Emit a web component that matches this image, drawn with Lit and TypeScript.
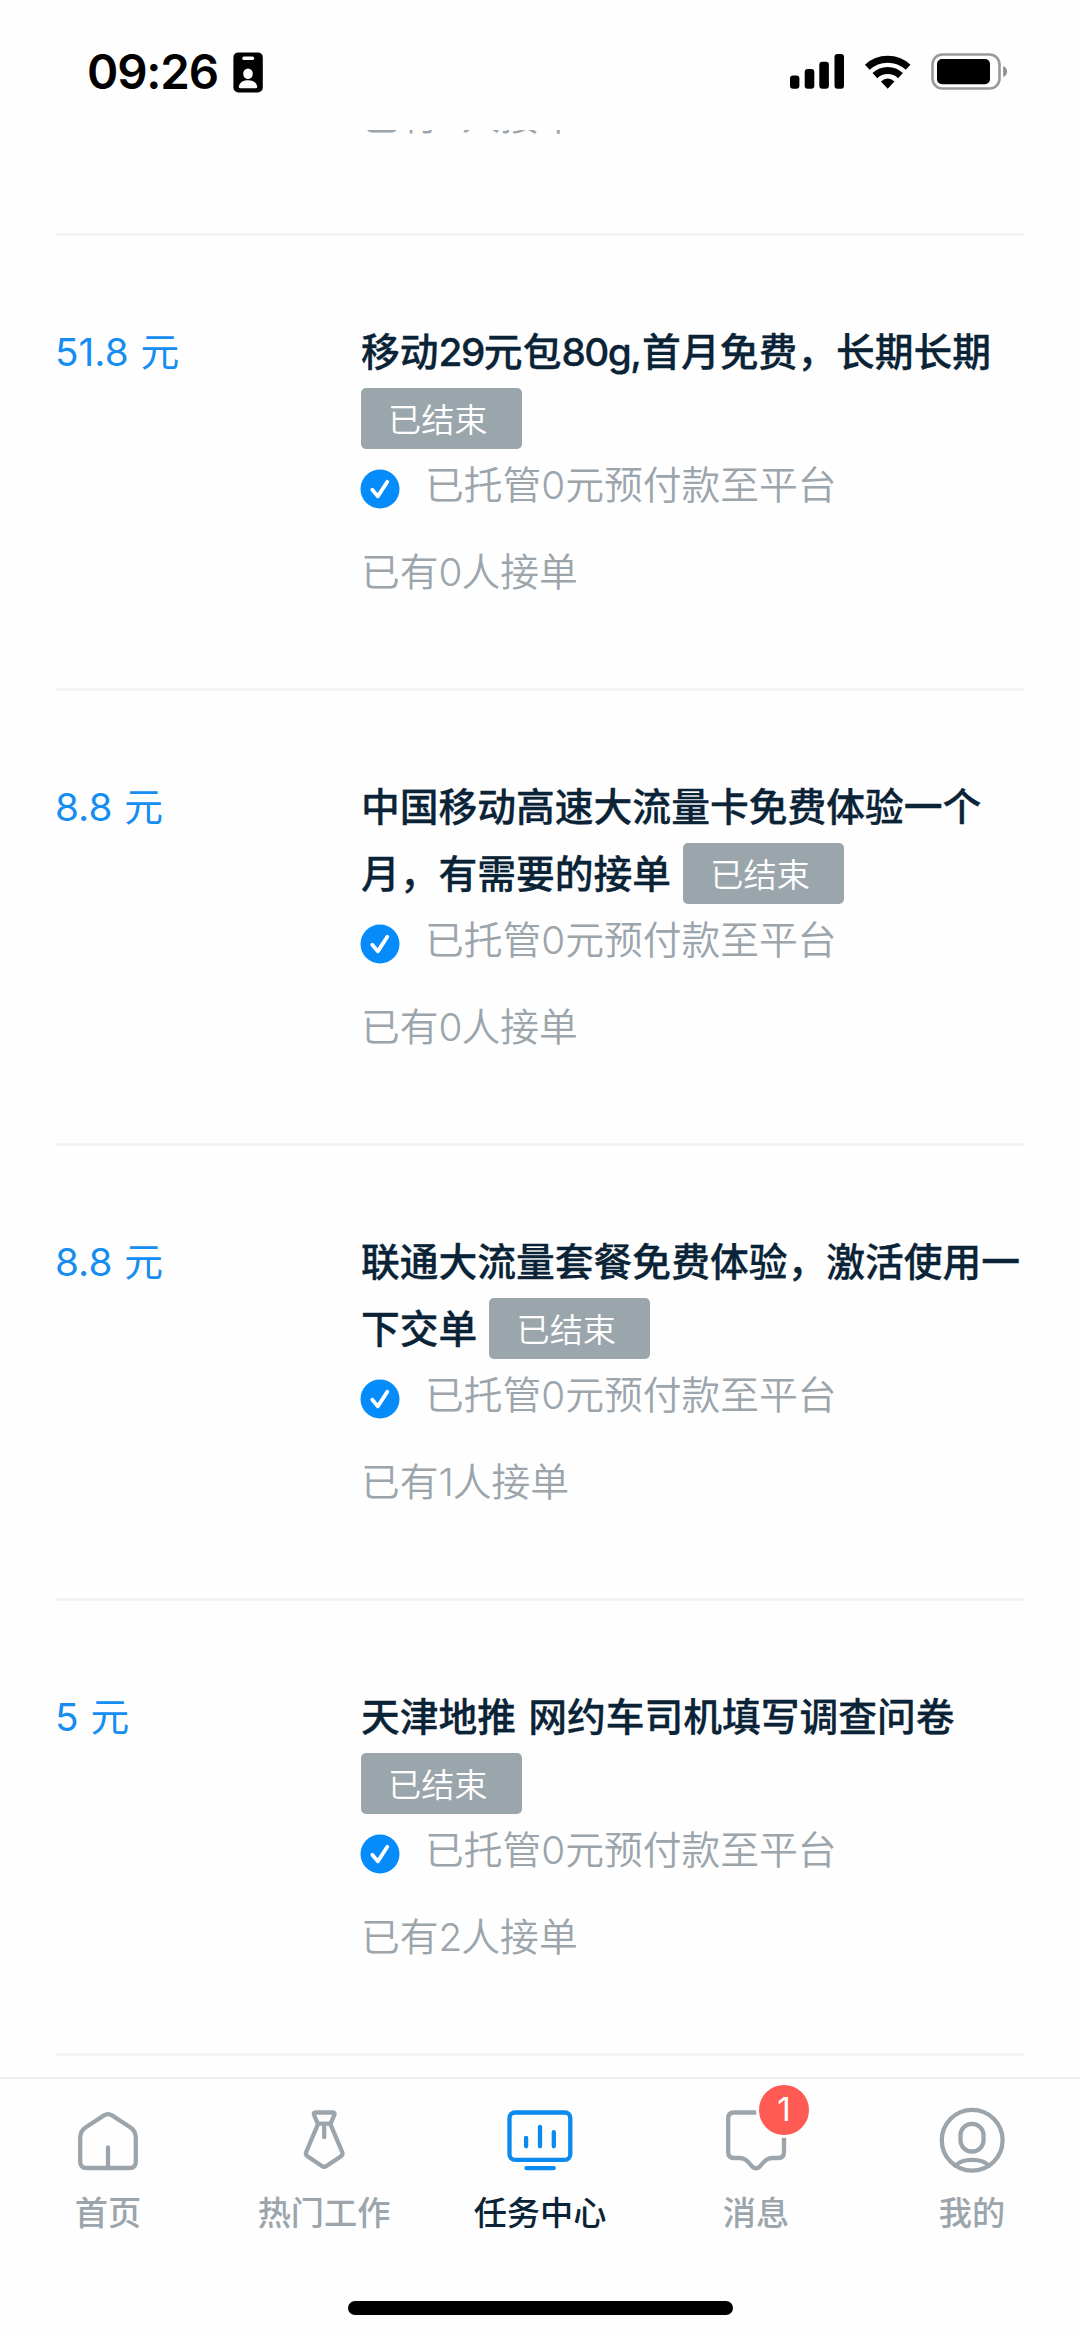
import { LitElement, html, css, svg } from "lit";
import { customElement, property } from "lit/decorators.js";
import { classMap } from "lit/directives/class-map.js";

interface Task {
  price: string;
  title: string;
  deposit: number;
  takers: number;
}

const TASKS: Task[] = [
  { price: "51.8", title: "移动29元包80g,首月免费，长期长期", deposit: 0, takers: 0 },
  { price: "8.8", title: "中国移动高速大流量卡免费体验一个月，有需要的接单", deposit: 0, takers: 0 },
  { price: "8.8", title: "联通大流量套餐免费体验，激活使用一下交单", deposit: 0, takers: 1 },
  { price: "5", title: "天津地推 网约车司机填写调查问卷", deposit: 0, takers: 2 },
];

const TABS = [
  {
    label: "首页",
    icon: svg`<path d="M18.5 70Q12.2 70 12.2 63.7V40Q12.2 32.8 17.8 29.2L36 17.4Q40 14.8 44 17.4L62.2 29.2Q67.8 32.8 67.8 40V63.7Q67.8 70 61.5 70Z"/><path d="M40 49.5V70"/>`,
  },
  {
    label: "热门工作",
    icon: svg`<path d="M31.6 14.5H48.8Q51.4 14.5 50.3 17L46.6 25.6H33.8L30.1 17Q29 14.5 31.6 14.5Z"/><path d="M34.2 25.6L22.2 54Q21.2 56.6 23.4 58.2L38.2 68.2Q40.2 69.4 42.2 68.2L57 58.2Q59.2 56.6 58.2 54L46.2 25.6"/><path d="M40.2 27V39.2"/>`,
  },
  {
    label: "任务中心",
    active: true,
    icon: svg`<rect x="9.5" y="14.5" width="60.8" height="47.3" rx="5.5"/><path d="M26.1 40V48.3M40 28.8V48.3M53.8 34.2V48.3M26.4 70.1H53.8"/>`,
  },
  {
    label: "消息",
    badge: 1,
    icon: svg`<path d="M68 30V54Q68 60 62 60H57C50 60 48 64 44 68.3Q40 72 36 68.3C32 64 30 60 23 60H18Q12.2 60 12.2 54V20.3Q12.2 14.5 18 14.5H50"/>`,
  },
  {
    label: "我的",
    icon: svg`<circle cx="40.2" cy="42.3" r="30.4"/><rect x="28.5" y="25.9" width="23" height="27.6" rx="11.3"/><path d="M23.5 67.8C30 60 50.4 60 56.9 67.8"/>`,
  },
];

/** Wraps runs of digits and Latin letters so they can be set tighter than the Han text. */
const tighten = (text: string) =>
  text
    .split(/([0-9A-Za-z]+)/)
    .map((part, i) => (i % 2 ? html`<span class="latin">${part}</span>` : part));

@customElement("status-bar")
class StatusBar extends LitElement {
  static styles = css`
    :host {
      display: flex;
      flex: none;
      box-sizing: border-box;
      height: 130px;
      padding: 50px 72px 0 87px;
      align-items: flex-start;
    }
    .time {
      font: 600 47.5px/44px Inter, "Liberation Sans", sans-serif;
      letter-spacing: -1.2px;
      width: 146px;
      white-space: nowrap;
    }
    .spacer { flex: 1; }
    svg { display: block; height: 44px; }
    .cell { margin-right: 20px; }
    .wifi { margin-right: 18px; }
  `;
  render() {
    return html`
      <div class="time">09:26</div>
      <svg width="30" height="44" viewBox="0 0 30 44">
        <rect x="0.4" y="2.4" width="29.4" height="40" rx="5" />
        <rect x="9.3" y="6.4" width="11.8" height="3.6" rx="1.6" fill="#fff" />
        <ellipse cx="15" cy="23.8" rx="4.8" ry="5.3" fill="#fff" />
        <path d="M5.8 36.4C7 31.5 11 30.2 15 30.2S23 31.5 24.2 36.4Q24.4 38.3 22.6 38.3H7.4Q5.6 38.3 5.8 36.4Z" fill="#fff" />
      </svg>
      <div class="spacer"></div>
      <svg class="cell" width="54" height="44" viewBox="0 0 54 44">
        <rect x="0" y="25.6" width="9.4" height="13.2" rx="3" />
        <rect x="14.7" y="19" width="9.6" height="19.8" rx="3" />
        <rect x="29.3" y="11.8" width="9.6" height="27" rx="3" />
        <rect x="44.5" y="4.1" width="9.5" height="34.7" rx="3" />
      </svg>
      <svg class="wifi" width="48" height="44" viewBox="0 0 48 44">
        <g fill="none" stroke="#000" stroke-width="7">
          <path d="M3.3 17.3A30 30 0 0 1 44.1 17.3" />
          <path d="M10.9 25.6A18.6 18.6 0 0 1 36.5 25.6" />
        </g>
        <path d="M16.9 31.6Q23.7 25.2 30.5 31.6L23.7 38.8Z" />
      </svg>
      <svg width="78" height="44" viewBox="0 0 78 44">
        <rect x="2.5" y="4.5" width="67" height="34" rx="10" fill="none" stroke="#999" stroke-width="2.6" />
        <rect x="7" y="9" width="53" height="25.3" rx="5" />
        <path d="M73.2 16Q77 17.6 77 21.5T73.2 27Z" fill="#8e8e8e" />
      </svg>
    `;
  }
}

@customElement("task-row")
class TaskRow extends LitElement {
  @property({ attribute: false }) task!: Task;
  static styles = css`
    :host {
      display: flex;
      box-sizing: border-box;
      height: 455px;
      padding-top: 83px;
      border-bottom: 3px solid #f1f3f4;
      line-height: 66.5px;
    }
    .price { flex: none; width: 306px; margin-left: -1px; color: #168df0; font-weight: 400; word-spacing: 1px; }
    .body { flex: 1; min-width: 0; }
    .title { color: #0a2336; font-weight: 500; word-spacing: 1.8px; -webkit-text-stroke: 0.3px currentColor; }
    .latin { letter-spacing: -1.5px; }
    .tag {
      display: inline-block;
      vertical-align: top;
      box-sizing: border-box;
      width: 161px;
      height: 61px;
      margin: 2px 0 3.5px;
      padding: 2px 0 0 27px;
      border-radius: 5px;
      background: #9ba5ac;
      color: #fff;
      font-size: 33.2px;
      font-weight: 350;
      line-height: 60px;
      -webkit-text-stroke: 0;
    }
    .escrow { display: flex; align-items: center; }
    .check { flex: none; margin: 8px 25px 0 -1px; }
    .escrow, .takers { color: #9ba5ab; font-weight: 350; }
    .takers { margin-top: 20px; }
    .takers .latin { letter-spacing: -1px; }
  `;
  render() {
    const t = this.task;
    return html`
      <div class="price">${t.price} 元</div>
      <div class="body">
        <div class="title">${tighten(t.title)} <span class="tag">已结束</span></div>
        <div class="escrow">
          <svg class="check" width="40" height="40" viewBox="0 0 40 40">
            <circle cx="20" cy="20" r="19.5" fill="#068bfa" />
            <path d="M12.3 20.8L17.8 27.4L27.3 12.8" fill="none" stroke="#fff" stroke-width="3.8" stroke-linecap="round" stroke-linejoin="round" />
          </svg>
          <span>已托管${t.deposit}元预付款至平台</span>
        </div>
        <div class="takers">${tighten(`已有${t.takers}人接单`)}</div>
      </div>
    `;
  }
}

@customElement("tab-bar")
class TabBar extends LitElement {
  static styles = css`
    :host {
      display: flex;
      flex-direction: column;
      flex: none;
      box-sizing: border-box;
      height: 260px;
      border-top: 2px solid #eceff0;
      align-items: center;
    }
    .tabs { display: flex; width: 100%; padding-top: 19px; height: 222px; box-sizing: border-box; }
    .tab {
      flex: 1;
      display: flex;
      flex-direction: column;
      align-items: center;
      color: #9ba5ab;
      font-size: 33.2px;
      font-weight: 500;
      line-height: 46px;
    }
    .icon { position: relative; width: 80px; height: 80px; margin-bottom: 12px; }
    .icon svg { display: block; fill: none; stroke: currentColor; stroke-width: 4.3; stroke-linecap: round; stroke-linejoin: round; }
    .active { color: #0a2336; }
    .active .icon { color: #0b8bef; }
    .badge {
      position: absolute;
      left: 40px;
      top: -16px;
      width: 50px;
      height: 50px;
      border: 3px solid #fefefe;
      border-radius: 50%;
      background: #ff5a54;
      color: #fff;
      font-weight: 400;
      line-height: 48px;
      text-align: center;
    }
    .handle { width: 385px; height: 14px; border-radius: 7px; background: #000; }
  `;
  render() {
    return html`
      <div class="tabs">
        ${TABS.map(
          (t) => html`<div class=${classMap({ tab: true, active: !!t.active })}>
            <div class="icon">
              <svg width="80" height="80" viewBox="0 0 80 80">${t.icon}</svg>
              ${t.badge ? html`<span class="badge">${t.badge}</span>` : null}
            </div>
            <span>${t.label}</span>
          </div>`
        )}
      </div>
      <div class="handle"></div>
    `;
  }
}

@customElement("app-root")
class AppRoot extends LitElement {
  static styles = css`
    :host {
      display: flex;
      flex-direction: column;
      width: 1080px;
      height: 2337px;
      overflow: hidden;
      background: #fefefe;
      font-family: Inter, "Noto Sans CJK SC", sans-serif;
      font-size: 38.77px;
    }
    .list { flex: 1; min-height: 0; overflow: hidden; padding: 0 56px; }
    .scrolled {
      box-sizing: border-box;
      height: 153px;
      margin-top: -47px;
      padding-left: 305px;
      border-bottom: 3px solid #f1f3f4;
      color: #9ba5ab;
      font-weight: 350;
      line-height: 66.5px;
    }
    .scrolled .latin { letter-spacing: -1px; }
  `;
  render() {
    return html`
      <status-bar></status-bar>
      <div class="list">
        <div class="scrolled">${tighten("已有0人接单")}</div>
        ${TASKS.map((t) => html`<task-row .task=${t}></task-row>`)}
      </div>
      <tab-bar></tab-bar>
    `;
  }
}
